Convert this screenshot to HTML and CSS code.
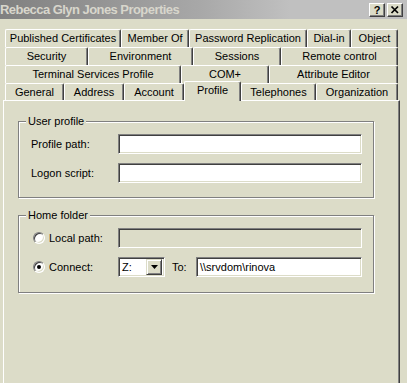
FILE: index.html
```html
<!DOCTYPE html>
<html>
<head>
<meta charset="utf-8">
<title>Rebecca Glyn Jones Properties</title>
<link rel="stylesheet" href="styles.css">
</head>
<body>
<div class="window">
  <div class="titlebar">
    <span class="title">Rebecca Glyn Jones Properties</span>
    <div class="caption-buttons">
      <span class="cbtn help">?</span>
      <span class="cbtn close"><svg width="14" height="12" viewBox="0 0 14 12"><path d="M3.5 2.5 L10 9 M10 2.5 L3.5 9" stroke="#000" stroke-width="1.7" fill="none"/></svg></span>
    </div>
  </div>

  <div class="tabs">
    <div class="tab-row row1">
      <div class="tab">Published Certificates</div>
      <div class="tab">Member Of</div>
      <div class="tab">Password Replication</div>
      <div class="tab">Dial-in</div>
      <div class="tab">Object</div>
    </div>
    <div class="tab-row row2">
      <div class="tab">Security</div>
      <div class="tab">Environment</div>
      <div class="tab">Sessions</div>
      <div class="tab">Remote control</div>
    </div>
    <div class="tab-row row3">
      <div class="tab">Terminal Services Profile</div>
      <div class="tab">COM+</div>
      <div class="tab">Attribute Editor</div>
    </div>
    <div class="tab-row row4">
      <div class="tab">General</div>
      <div class="tab">Address</div>
      <div class="tab">Account</div>
      <div class="tab selected">Profile</div>
      <div class="tab">Telephones</div>
      <div class="tab">Organization</div>
    </div>
  </div>

  <div class="panel">
    <div class="group user-profile">
      <span class="legend">User profile</span>
      <div class="form-grid">
        <span class="label">Profile path:</span>
        <div class="field"></div>
        <span class="label">Logon script:</span>
        <div class="field"></div>
      </div>
    </div>

    <div class="group home-folder">
      <span class="legend">Home folder</span>
      <div class="form-grid">
        <span class="label radio-label"><span class="radio"></span>Local path:</span>
        <div class="field disabled"></div>
        <span class="label radio-label"><span class="radio checked"></span>Connect:</span>
        <div class="connect-row">
          <div class="field combo"><span class="combo-value">Z:</span><span class="drop-btn"><svg width="7" height="4" viewBox="0 0 7 4"><path d="M0 0h7L3.5 4z" fill="#000"/></svg></span></div>
          <span class="to-label">To:</span>
          <div class="field path-field">\\srvdom\rinova</div>
        </div>
      </div>
    </div>
  </div>
</div>
</body>
</html>
```

FILE: styles.css
```css
html, body {
  margin: 0;
  padding: 0;
  background: #dcdcc8;
  overflow: hidden;
}

body {
  width: 407px;
  height: 383px;
  font-family: "Liberation Sans", Arial, sans-serif;
  font-size: 11px;
  color: #000;
}

.window {
  width: 407px;
  height: 383px;
}

/* Title bar */
.titlebar {
  height: 19px;
  display: flex;
  align-items: center;
  background: linear-gradient(to right, #808080 0px, #a8a8a8 200px, #c0c0c0 290px, #c0c0c0 100%);
  padding-right: 4px;
  box-sizing: border-box;
}

.title {
  flex: 1;
  font-weight: bold;
  font-size: 13px;
  color: #d8d6cc;
  white-space: nowrap;
  padding-left: 0px;
  letter-spacing: -0.55px;
}

.caption-buttons {
  display: flex;
  gap: 2px;
  margin-top: 1px;
}

.cbtn {
  box-sizing: border-box;
  width: 16px;
  height: 14px;
  background: #dcdcc8;
  border: 1px solid;
  border-color: #fff #404040 #404040 #fff;
  box-shadow: inset -1px -1px #808080;
  display: flex;
  align-items: center;
  justify-content: center;
  font-weight: bold;
  font-size: 11px;
  line-height: 12px;
}

/* Tabs */
.tabs {
  margin-top: 10px;
  padding-left: 5px;
}

.tab-row {
  display: grid;
  height: 18px;
  width: 393px;
}

.row1 { grid-template-columns: 116px 68px 118px 44px 47px; }
.row2 { grid-template-columns: 83px 105px 88px 117px; }
.row3 { grid-template-columns: 176px 88px 129px; }
.row4 { grid-template-columns: 59px 60px 60px 57px 75px 82px; height: 17px; }

.tab {
  box-sizing: border-box;
  border-top: 1px solid #fff;
  border-left: 1px solid #fff;
  border-right: 1px solid #404040;
  box-shadow: inset -1px 0 #808080;
  border-top-left-radius: 2px;
  border-top-right-radius: 2px;
  background: #dcdcc8;
  text-align: center;
  line-height: 17px;
  white-space: nowrap;
  overflow: hidden;
}

.tab.selected {
  position: relative;
  z-index: 2;
  margin-top: -2px;
  height: 20px;
  line-height: 16px;
}

/* Panel */
.panel {
  position: relative;
  z-index: 1;
  margin-left: 3px;
  width: 397px;
  height: 290px;
  box-sizing: border-box;
  border-top: 1px solid #fff;
  border-left: 1px solid #fff;
  border-right: 1px solid #404040;
  box-shadow: inset -1px 0 #808080;
  padding-top: 20px;
  padding-left: 14px;
}

.group {
  position: relative;
  box-sizing: border-box;
  width: 356px;
  border: 1px solid #808080;
  box-shadow: inset 1px 1px #fff, 1px 1px #fff;
  padding-left: 12px;
}

.user-profile {
  padding-top: 12px;
  padding-bottom: 14px;
}

.home-folder {
  margin-top: 17px;
  padding-top: 12px;
  padding-bottom: 15px;
}

.legend {
  position: absolute;
  top: -7px;
  left: 7px;
  padding: 0 2px;
  background: #dcdcc8;
  line-height: 13px;
}

.form-grid {
  display: grid;
  grid-template-columns: 87px 244px;
  grid-auto-rows: 20px;
  row-gap: 9px;
  align-items: center;
}

.label {
  white-space: nowrap;
}

.radio-label {
  display: flex;
  align-items: center;
}

.radio {
  box-sizing: border-box;
  width: 12px;
  height: 12px;
  margin-left: 2px;
  margin-right: 4px;
  border-radius: 50%;
  border: 1px solid;
  border-color: #808080 #fff #fff #808080;
  box-shadow: inset 1px 1px #404040, inset -1px -1px #dcdcc8;
  background: #fff;
  display: flex;
  align-items: center;
  justify-content: center;
}

.radio.checked::after {
  content: "";
  width: 4px;
  height: 4px;
  border-radius: 50%;
  background: #000;
}

.field {
  box-sizing: border-box;
  height: 20px;
  border: 1px solid;
  border-color: #808080 #fff #fff #808080;
  box-shadow: inset 1px 1px #404040, inset -1px -1px #dcdcc8;
  background: #fff;
}

.field.disabled {
  background: #dcdcc8;
}

.connect-row {
  display: flex;
  align-items: center;
  height: 20px;
}

.combo {
  width: 47px;
  display: flex;
  align-items: center;
  justify-content: space-between;
  padding: 2px;
}

.combo-value {
  padding-left: 1px;
  line-height: 14px;
}

.drop-btn {
  box-sizing: border-box;
  width: 16px;
  height: 16px;
  background: #dcdcc8;
  border: 1px solid;
  border-color: #dcdcc8 #404040 #404040 #dcdcc8;
  box-shadow: inset 1px 1px #fff, inset -1px -1px #808080;
  display: flex;
  align-items: center;
  justify-content: center;
}

.to-label {
  margin-left: 7px;
  width: 24px;
}

.path-field {
  width: 166px;
  padding-left: 3px;
  line-height: 18px;
  white-space: nowrap;
}
```
